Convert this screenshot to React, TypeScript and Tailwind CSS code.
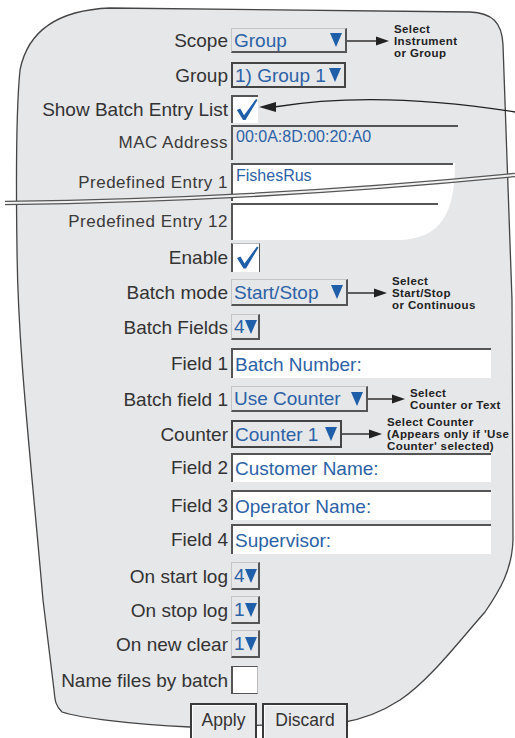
import React from "react";

// couleurs du panneau
const BLUE = "#2c62a6";

function Tri() {
  return (
    <svg width="12" height="14" viewBox="0 0 12 14" className="shrink-0">
      <polygon points="0,0 12,0 6,14" fill="#1f5ea8" />
    </svg>
  );
}

function Check() {
  return (
    <svg width="26" height="26" viewBox="0 0 26 26">
      <path d="M4 13 L7.5 11.5 L11.5 18.5 L24 1.5 L25.5 2.5 L13 23.5 L10.5 23.5 Z" fill="#1f5ea8" />
    </svg>
  );
}

function Arrow({ w }: { w: number }) {
  return (
    <svg width={w} height="10" viewBox={`0 0 ${w} 10`} className="shrink-0">
      <line x1="0" y1="5" x2={w - 12} y2="5" stroke="#222" strokeWidth="1.4" />
      <polygon points={`${w - 13},0.5 ${w},5 ${w - 13},9.5`} fill="#222" />
    </svg>
  );
}

function Note({ lines }: { lines: string[] }) {
  return (
    <div className="ml-[5px] text-[11.5px] font-bold leading-[12px] tracking-[0.4px] text-[#222]">
      {lines.map((l) => (
        <div key={l}>{l}</div>
      ))}
    </div>
  );
}

function Row({ label, cls, small, children }: { label: string; cls: string; small?: boolean; children: React.ReactNode }) {
  return (
    <div className={`flex items-center ${cls}`}>
      <div
        className={
          small
            ? "w-[228px] shrink-0 text-right text-[17px] leading-none tracking-[0.5px] text-[#3a3a3a]"
            : "w-[228px] shrink-0 text-right text-[19px] leading-none text-[#333]"
        }
      >
        {label}
      </div>
      <div className="ml-[3px] flex h-full items-center">{children}</div>
    </div>
  );
}

// liste déroulante "relief"
function Select({ text, w, framed }: { text: string; w: string; framed?: boolean }) {
  return (
    <div
      className={`flex h-full items-center justify-between pl-[2px] pr-[3px] text-[19px] ${w} ${
        framed
          ? "border-2 border-[#444]"
          : "border-t border-l border-t-[#c4c5c7] border-l-[#c4c5c7] border-r-2 border-b-2 border-r-[#555] border-b-[#555]"
      }`}
      style={{ color: BLUE }}
    >
      <span className="leading-none">{text}</span>
      <Tri />
    </div>
  );
}

function TextBox({ text }: { text: string }) {
  return (
    <div
      className="flex h-full w-[260px] items-center border-t-2 border-l-2 border-[#555] bg-white pl-[2px] text-[19px] leading-none"
      style={{ color: BLUE }}
    >
      {text}
    </div>
  );
}

function Box({ checked, cls }: { checked?: boolean; cls: string }) {
  return (
    <div className={`flex h-full items-center justify-center bg-white ${cls}`}>
      {checked && <Check />}
    </div>
  );
}

export default function App() {
  return (
    <div className="relative h-[738px] w-[515px] overflow-hidden bg-white font-['Liberation_Sans',Arial,sans-serif]">
      {/* fond du panneau */}
      <svg className="absolute inset-0" width="515" height="738" viewBox="0 0 515 738">
        <path
          d="M17 250 C16 180 16 110 20 70 C28 30 60 10 110 8 L470 12 C492 13 502 22 503 45 L512 300 L513 540 C512 570 500 590 485 612 C460 640 430 680 400 700 C380 713 360 720 340 723 L190 727 C130 724 80 718 62 712 C55 705 55 700 54 690 L43 600 C30 450 18 350 17 250 Z"
          fill="#e6e7e9"
          stroke="#444"
          strokeWidth="1.3"
        />
        <path d="M231 163 L455 163 C455 215 440 238 400 240 L231 240 Z" fill="#fff" />
      </svg>

      <div className="relative z-10 flex flex-col pt-[28px]">
        <Row label="Scope" cls="h-[25px]">
          <Select text="Group" w="w-[116px]" />
          <Arrow w={42} />
          <Note lines={["Select", "Instrument", "or Group"]} />
        </Row>
        <Row label="Group" cls="mt-[9px] h-[26px]">
          <Select text="1) Group 1" w="w-[115px]" framed />
        </Row>
        <Row label="Show Batch Entry List" cls="mt-[7px] h-[28px]">
          <Box checked cls="w-[27px] border-t-2 border-l-2 border-[#555]" />
        </Row>
        <Row label="MAC Address" small cls="mt-[2px] h-[35px]">
          <div className="h-full w-[227px] border-t-2 border-l-2 border-[#555] pl-[3px] pt-[1px] text-[16px] leading-[18px]" style={{ color: BLUE }}>
            00:0A:8D:00:20:A0
          </div>
        </Row>
        <Row label="Predefined Entry 1" small cls="mt-[3px] h-[38px]">
          <div className="h-full w-[222px] border-t-2 border-l-2 border-[#555] pl-[3px] pt-[2px] text-[16px] leading-[18px]" style={{ color: BLUE }}>
            FishesRus
          </div>
        </Row>
        <Row label="Predefined Entry 12" small cls="mt-[2px] h-[37px]">
          <div className="h-full w-[207px] border-t-2 border-l-2 border-[#555]" />
        </Row>
        <Row label="Enable" cls="mt-[3px] h-[29px]">
          <Box checked cls="w-[29px] border-l-2 border-r border-t border-[#555] border-t-[#bbb]" />
        </Row>
        <Row label="Batch mode" cls="mt-[7px] h-[27px]">
          <Select text="Start/Stop" w="w-[117px]" />
          <Arrow w={39} />
          <Note lines={["Select", "Start/Stop", "or Continuous"]} />
        </Row>
        <Row label="Batch Fields" cls="mt-[8px] h-[26px]">
          <Select text="4" w="w-[29px]" />
        </Row>
        <Row label="Field 1" cls="mt-[8px] h-[30px]">
          <TextBox text="Batch Number:" />
        </Row>
        <Row label="Batch field 1" cls="mt-[8px] h-[26px]">
          <Select text="Use Counter" w="w-[137px]" />
          <Arrow w={37} />
          <Note lines={["Select", "Counter or Text"]} />
        </Row>
        <Row label="Counter" cls="mt-[8px] h-[28px]">
          <Select text="Counter 1" w="w-[111px]" framed />
          <Arrow w={40} />
          <Note lines={["Select Counter", "(Appears only if 'Use", "Counter' selected)"]} />
        </Row>
        <Row label="Field 2" cls="mt-[5px] h-[29px]">
          <TextBox text="Customer Name:" />
        </Row>
        <Row label="Field 3" cls="mt-[8px] h-[30px]">
          <TextBox text="Operator Name:" />
        </Row>
        <Row label="Field 4" cls="mt-[4px] h-[30px]">
          <TextBox text="Supervisor:" />
        </Row>
        <Row label="On start log" cls="mt-[8px] h-[28px]">
          <Select text="4" w="w-[29px]" />
        </Row>
        <Row label="On stop log" cls="mt-[6px] h-[28px]">
          <Select text="1" w="w-[29px]" />
        </Row>
        <Row label="On new clear" cls="mt-[6px] h-[28px]">
          <Select text="1" w="w-[29px]" />
        </Row>
        <Row label="Name files by batch" cls="mt-[8px] h-[28px]">
          <Box cls="w-[27px] border-t border-l-2 border-b border-[#555] border-r border-r-[#bbb]" />
        </Row>
        <div className="mt-[9px] flex gap-[5px] pl-[190px]">
          <button className="flex h-[40px] w-[67px] items-start justify-center border-2 border-[#3a3a3a] bg-[#e8e9eb] pt-[7px] text-[17.5px] leading-none text-[#333] shadow-[inset_1px_1px_0_#fff]">
            Apply
          </button>
          <button className="flex h-[40px] w-[86px] items-start justify-center border-2 border-[#3a3a3a] bg-[#e8e9eb] pt-[7px] text-[17.5px] leading-none text-[#333] shadow-[inset_1px_1px_0_#fff]">
            Discard
          </button>
        </div>
      </div>

      {/* trait de coupure et flèche vers la case à cocher */}
      <svg className="pointer-events-none absolute inset-0 z-20" width="515" height="738" viewBox="0 0 515 738">
        <path d="M5 203 Q260 200 515 175" fill="none" stroke="#555" strokeWidth="4.6" />
        <path d="M5 203 Q260 200 515 175" fill="none" stroke="#f2f2f2" strokeWidth="2" />
        <path d="M515 112 Q378 90 274 107" fill="none" stroke="#222" strokeWidth="1.3" />
        <polygon points="259,107 276,102 276,112" fill="#222" />
      </svg>
    </div>
  );
}
